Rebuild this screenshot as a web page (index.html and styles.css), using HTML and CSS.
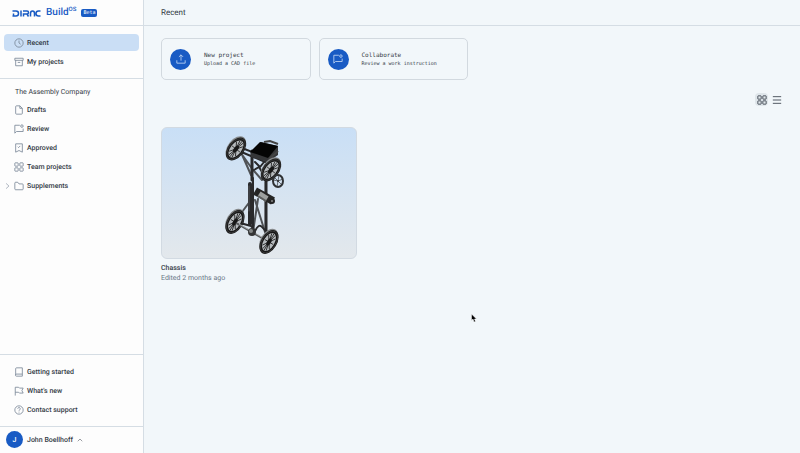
FILE: index.html
```html
<!DOCTYPE html>
<html lang="en">
<head>
<meta charset="utf-8">
<title>Recent</title>
<link rel="stylesheet" href="styles.css">
</head>
<body>
<svg class="defs" aria-hidden="true">
  <symbol id="i-clock" viewBox="0 0 24 24"><circle cx="12" cy="12" r="10"/><path d="M12 6v6l4 3"/></symbol>
  <symbol id="i-archive" viewBox="0 0 24 24"><path d="M2 3h20v5H2zM4 8v13h16V8M9 13h6"/></symbol>
  <symbol id="i-file" viewBox="0 0 24 24"><path d="M14 2H6a2 2 0 0 0-2 2v16a2 2 0 0 0 2 2h12a2 2 0 0 0 2-2V8zM14 2v6h6"/></symbol>
  <symbol id="i-review" viewBox="0 0 24 24"><path d="M14 3H2v19l4-4h16v-7"/><circle cx="19" cy="5" r="3"/></symbol>
  <symbol id="i-approved" viewBox="0 0 24 24"><path d="M4 2h16v20l-8-4-8 4zM9 9l2 2 4-4"/></symbol>
  <symbol id="i-grid" viewBox="0 0 24 24"><rect x="2" y="2" width="8" height="8" rx="1"/><rect x="14" y="2" width="8" height="8" rx="1"/><rect x="2" y="14" width="8" height="8" rx="1"/><rect x="14" y="14" width="8" height="8" rx="1"/></symbol>
  <symbol id="i-folder" viewBox="0 0 24 24"><path d="M2 19V5a2 2 0 0 1 2-2h5l3 4h8a2 2 0 0 1 2 2v10a2 2 0 0 1-2 2H4a2 2 0 0 1-2-2z"/></symbol>
  <symbol id="i-book" viewBox="0 0 24 24"><path d="M4 19V4a2 2 0 0 1 2-2h14v20H6a2 2 0 0 1 0-5h14"/></symbol>
  <symbol id="i-flag" viewBox="0 0 24 24"><path d="M3 23V3h8l2 2h9l-3 6 3 6h-9l-2-2H3"/></symbol>
  <symbol id="i-help" viewBox="0 0 24 24"><circle cx="12" cy="12" r="10"/><path d="M9 9a3 3 0 1 1 4.500 2.600c-1 .6-1.500 1.200-1.500 2.400M12 16v2"/></symbol>
  <symbol id="i-upload" viewBox="0 0 24 24"><path d="M12 16V2M7 7l5-5 5 5M2 15v7h20v-7"/></symbol>
  <symbol id="i-list" viewBox="0 0 24 24"><path d="M2 4h20M2 12h20M2 20h20"/></symbol>
  <symbol id="i-right" viewBox="0 0 24 24"><path d="M7 3l10 9-10 9"/></symbol>
  <symbol id="i-up" viewBox="0 0 24 24"><path d="M3 17l9-9 9 9"/></symbol>
</svg>
<div class="app">
  <aside class="sidebar">
    <div class="brand">
      <svg class="logo" viewBox="0 0 58 14" role="img" aria-label="Dirac"><path d="M1 2H8Q13 2 13 7T8 12H1M3 7V12M18 1V13M23 13V8H30Q33 8 33 5T30 2H22M30 8L33 13M37 13V7Q37 2 41 2T45 7V13M57 2H53Q48 2 48 7T53 12H57"/></svg>
      <span class="product">Build<sup>OS</sup></span>
      <span class="beta">Beta</span>
    </div>
    <nav class="group">
      <a class="item active" href="#"><svg><use href="#i-clock"/></svg>Recent</a>
      <a class="item" href="#"><svg><use href="#i-archive"/></svg>My projects</a>
    </nav>
    <nav class="group team">
      <h2>The Assembly Company</h2>
      <a class="item" href="#"><svg><use href="#i-file"/></svg>Drafts</a>
      <a class="item" href="#"><svg><use href="#i-review"/></svg>Review</a>
      <a class="item" href="#"><svg><use href="#i-approved"/></svg>Approved</a>
      <a class="item" href="#"><svg><use href="#i-grid"/></svg>Team projects</a>
      <a class="item expandable" href="#"><svg class="chevron"><use href="#i-right"/></svg><svg><use href="#i-folder"/></svg>Supplements</a>
    </nav>
    <nav class="group help">
      <a class="item" href="#"><svg><use href="#i-book"/></svg>Getting started</a>
      <a class="item" href="#"><svg><use href="#i-flag"/></svg>What's new</a>
      <a class="item" href="#"><svg><use href="#i-help"/></svg>Contact support</a>
    </nav>
    <button class="user" type="button"><span class="avatar">J</span>John Boellhoff<svg><use href="#i-up"/></svg></button>
  </aside>
  <main>
    <header><h1>Recent</h1></header>
    <div class="content">
      <div class="actions">
        <button class="action" type="button"><span class="disc"><svg><use href="#i-upload"/></svg></span><span class="label"><b>New project</b><small>Upload a CAD file</small></span></button>
        <button class="action" type="button"><span class="disc"><svg><use href="#i-review"/></svg></span><span class="label"><b>Collaborate</b><small>Review a work instruction</small></span></button>
      </div>
      <div class="views">
        <button class="selected" type="button" aria-label="Grid view"><svg><use href="#i-grid"/></svg></button>
        <button type="button" aria-label="List view"><svg><use href="#i-list"/></svg></button>
      </div>
      <div class="projects">
        <a class="project" href="#">
          <svg class="thumb" viewBox="162 128 194 130" aria-hidden="true">
            <defs>
              <g id="wheel">
                <ellipse cx="-1" cy="-1" rx="8" ry="13" fill="#85888a"/>
                <ellipse rx="8" ry="13" fill="#161616"/>
                <ellipse rx="5.500" ry="10" fill="#b5b9bc"/>
                <path d="M0-10V10M-5 0H5M-4-6L4 6M-4 6L4-6M-2-9L2 9M-2 9L2-9" stroke="#222" stroke-width=".8"/>
                <ellipse rx="2" ry="4" fill="#171717"/>
                <ellipse rx="7" ry="12" fill="none" stroke="#666" stroke-width=".4"/>
              </g>
            </defs>
            <g fill="none" stroke="#29292b" stroke-linecap="round">
              <path d="M240 150L251 175M238 149L253 170M251 200L242 212M255 200L265 232M258 199L253 232M262 180L254 171" stroke="#505357"/>
              <path d="M239 151L270 164M242 148L270 159" stroke-width="2"/>
              <path d="M252 151V180" stroke-width="3"/>
              <path d="M253 178V229" stroke-width="2"/>
              <path d="M250 184V224" stroke-width="4"/>
              <path d="M249 186V211M265 182V230" stroke="#81858a" stroke-width=".5"/>
              <path d="M266 180V232" stroke-width="3"/>
              <path d="M254 170l5-3 3 5 7-6M255 162l5 5 4-5" stroke-width="2"/>
              <path d="M240 223L251 226L255 231Q259 223 262 227T268 232" stroke-width="2"/>
            </g>
            <path d="M251 153l10-11 17 4v9l-10 7-17-5z" fill="#353638"/>
            <path d="M250 152l10-10 18 4-10 12z" fill="#050505"/>
            <path d="M264 142l6-1 8 3M269 159l9-8" fill="none" stroke="#444" stroke-width="2"/>
            <path d="M255 191L273 201" stroke="#252525" stroke-width="8"/>
            <path d="M259 194L267 199" stroke="#9da09f" stroke-width="6"/>
            <path d="M258 196L266 201" stroke="#5b5d5d" stroke-width="2"/>
            <circle cx="272" cy="201" r="3" fill="#242424"/><circle cx="272" cy="201" r="1" fill="#888"/>
            <use href="#wheel" transform="translate(236 149) rotate(38)"/>
            <use href="#wheel" transform="translate(271 170) rotate(38)"/>
            <use href="#wheel" transform="translate(235 222) rotate(31)"/>
            <path d="M236 223L269 242" stroke="#55585a" stroke-width="2"/><path d="M239 224L265 239" stroke="#c3c5c5" stroke-width=".7"/>
            <circle cx="252" cy="232" r="4" fill="#343536"/><circle cx="251" cy="231" r="2" fill="#858888"/>
            <use href="#wheel" transform="translate(269 242) rotate(31)"/>
            <g fill="none" stroke="#303235"><ellipse cx="278" cy="181" rx="5" ry="6"/><path d="M278 181l-4-4M278 181l5-2M278 181l-1 6M269 179l9 2M278 181l1-6M278 181l4 4" stroke-width=".7"/></g>
            <circle cx="278" cy="181" r="1" fill="#303235"/>
          </svg>
          <strong>Chassis</strong>
          <span>Edited 2 months ago</span>
        </a>
      </div>
    </div>
  </main>
</div>
<svg class="cursor" viewBox="0 0 12 18" aria-hidden="true"><path d="M1 1v13l3-3 2 6 3-1-2-5h4z"/></svg>
</body>
</html>
```

FILE: styles.css
```css
* { box-sizing: border-box; }
body { margin: 0; font: 500 7px/10px Roboto, Inter, sans-serif; color: #343b46; background: #f2f7fa; text-rendering: geometricPrecision; }
a { color: inherit; text-decoration: none; }
button { font: inherit; color: inherit; background: none; border: 0; padding: 0; text-align: left; text-rendering: inherit; }
h1, h2 { margin: 0; font-weight: 400; }
svg { display: block; flex: none; fill: none; stroke: currentColor; stroke-width: 2; }
.defs { position: absolute; width: 0; height: 0; }
.app { display: grid; grid-template-columns: 144px 1fr; min-height: 100vh; }
.sidebar { display: flex; flex-direction: column; background: #fdfdfd; border-right: 1px solid #d5dde4; }
.brand { display: flex; align-items: center; height: 26px; padding: 1px 0 0 12px; border-bottom: 1px solid #d5dde4; color: #195bc4; }
.logo { width: 29px; height: 7px; margin-right: 5px; stroke-width: 3; }
.product { font-size: 10px; line-height: 12px; }
.product sup { font-size: 6px; line-height: 0; vertical-align: 4px; }
.beta { margin-left: 5px; padding: 0 2px; border-radius: 2px; background: #195bc4; color: #fff; font: 5px/8px "DejaVu Sans Mono", monospace; }
.group { display: flex; flex-direction: column; gap: 2px; padding: 8px 4px; }
.item { display: flex; align-items: center; height: 17px; padding-left: 10px; gap: 3px; border-radius: 4px; }
.item svg { width: 10px; height: 10px; color: #7a8797; }
.active { background: #cadef5; }
.team { border-top: 1px solid #d5dde4; }
.team h2 { padding: 0 11px; font-size: 7px; margin-bottom: 2px; }
.expandable { padding-left: 0; }
.expandable .chevron { width: 7px; }
.help { margin-top: auto; border-top: 1px solid #d5dde4; }
.user { display: flex; align-items: center; height: 27px; padding: 0 6px 1px; gap: 4px; border-top: 1px solid #d5dde4; }
.user svg { width: 6px; height: 6px; }
.avatar { display: grid; place-items: center; width: 17px; height: 17px; border-radius: 50%; background: #195bc4; color: #fff; }
header { display: flex; align-items: center; height: 26px; padding-left: 17px; border-bottom: 1px solid #d5dde4; }
h1 { font-size: 8px; }
.content { padding: 12px 17px; }
.actions { display: grid; grid-template-columns: repeat(4, 1fr); gap: 8px; }
.action { display: flex; align-items: center; gap: 13px; height: 42px; padding-left: 8px; border: 1px solid #d2d9df; border-radius: 5px; }
.disc { display: grid; place-items: center; width: 21px; height: 21px; border-radius: 50%; background: #195bc4; color: #c3d7f4; }
.disc svg { width: 10px; height: 10px; }
.label { display: grid; font-family: "DejaVu Sans Mono", monospace; }
.label b { font-weight: 400; font-size: 6px; line-height: 9px; }
.label small { font-size: 5px; line-height: 8px; }
.views { display: flex; justify-content: flex-end; gap: 2px; margin: 13px 0 21px; }
.views button { display: grid; place-items: center; width: 13px; height: 13px; border-radius: 4px; }
.views svg { width: 10px; height: 10px; }
.views .selected { background: #dfe6ea; }
.projects { display: grid; grid-template-columns: repeat(3, 1fr); gap: 17px; }
.project { display: flex; flex-direction: column; }
.thumb { width: 100%; height: auto; margin-bottom: 4px; border: 1px solid #d2dae2; border-radius: 6px; background: linear-gradient(#c9dff6, #e3e8ec); stroke: none; }
.project span { font-weight: 400; color: #6b7788; }
.project strong { font-weight: 500; }
.cursor { position: absolute; left: 471px; top: 313px; width: 6px; height: 10px; fill: #000; stroke: #fff; stroke-width: 1; }
```
